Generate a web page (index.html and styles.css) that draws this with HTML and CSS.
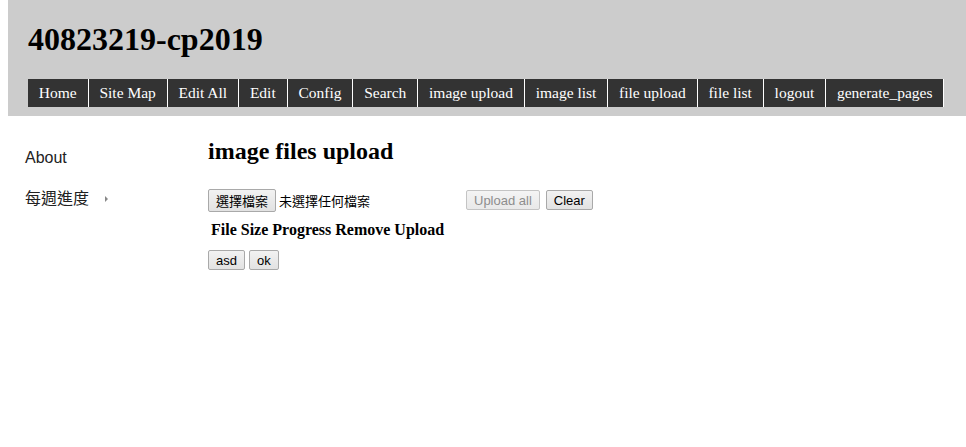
FILE: index.html
```html
<!DOCTYPE html>
<html lang="zh-Hant">
<head>
<meta charset="utf-8">
<title>40823219-cp2019</title>
<link rel="stylesheet" href="styles.css">
</head>
<body>
<header class="site-header">
  <h1 class="site-title">40823219-cp2019</h1>
  <nav class="top-nav">
    <a class="nav-item" href="#">Home</a>
    <a class="nav-item" href="#">Site Map</a>
    <a class="nav-item" href="#">Edit All</a>
    <a class="nav-item" href="#">Edit</a>
    <a class="nav-item" href="#">Config</a>
    <a class="nav-item" href="#">Search</a>
    <a class="nav-item" href="#">image upload</a>
    <a class="nav-item" href="#">image list</a>
    <a class="nav-item" href="#">file upload</a>
    <a class="nav-item" href="#">file list</a>
    <a class="nav-item" href="#">logout</a>
    <a class="nav-item" href="#">generate_pages</a>
  </nav>
</header>
<div class="main">
  <aside class="sidebar">
    <ul class="side-menu">
      <li class="side-item">About</li>
      <li class="side-item">每週進度<span class="arrow"></span></li>
    </ul>
  </aside>
  <section class="content">
    <h2 class="page-title">image files upload</h2>
    <div class="upload-row">
      <div class="file-field">
        <span class="btn btn-file">選擇檔案</span>
        <span class="file-status">未選擇任何檔案</span>
      </div>
      <button class="btn btn-disabled" disabled>Upload all</button>
      <button class="btn">Clear</button>
    </div>
    <table class="file-table">
      <tr><th>File</th><th>Size</th><th>Progress</th><th>Remove</th><th>Upload</th></tr>
    </table>
    <div class="action-row">
      <button class="btn">asd</button>
      <button class="btn">ok</button>
    </div>
  </section>
</div>
</body>
</html>
```
FILE: styles.css
```css
html, body {
  background: #fff;
}
body {
  margin: 0 0 0 8px;
  font-family: "Liberation Serif", "Times New Roman", serif;
  color: #000;
}
.site-header {
  background: #cccccc;
  padding: 1px 0 9px 20px;
}
.site-title {
  margin: 20px 0 21px 0;
  font-size: 32px;
  line-height: 37px;
  font-weight: bold;
}
.top-nav {
  display: flex;
}
.nav-item {
  display: block;
  background: #333333;
  color: #fff;
  text-decoration: none;
  font-size: 15.5px;
  line-height: 18px;
  padding: 5px 10.85px;
  border-right: 1px solid #fff;
  white-space: nowrap;
}
.main {
  display: flex;
  padding-top: 21px;
}
.sidebar {
  width: 200px;
  flex: none;
  padding-top: 10px;
}
.side-menu {
  list-style: none;
  margin: 0;
  padding: 0 0 0 17px;
}
.side-item {
  font-family: "Liberation Sans", Arial, "Noto Sans CJK TC", sans-serif;
  font-size: 16px;
  line-height: 21px;
  padding: 0 0 20px 0;
  color: #222;
  display: flex;
  align-items: center;
}
.arrow {
  display: inline-block;
  width: 0;
  height: 0;
  margin-left: 16px;
  border-left: 3px solid #888;
  border-top: 3px solid transparent;
  border-bottom: 3px solid transparent;
}
.content {
  flex: 1;
}
.page-title {
  margin: 0;
  font-size: 24px;
  line-height: 28px;
  font-weight: bold;
}
.upload-row {
  display: flex;
  align-items: flex-start;
  margin-top: 24px;
  gap: 6px;
}
.file-field {
  width: 252px;
  display: flex;
  align-items: center;
  gap: 3px;
  font-family: "Liberation Sans", Arial, "Noto Sans CJK TC", sans-serif;
  font-size: 13px;
}
.btn {
  box-sizing: border-box;
  display: inline-flex;
  align-items: center;
  justify-content: center;
  height: 20px;
  padding: 0 7px;
  margin: 1px 0 0 0;
  font-family: "Liberation Sans", Arial, "Noto Sans CJK TC", sans-serif;
  font-size: 13px;
  color: #000;
  background: linear-gradient(#f2f2f2, #e2e2e2);
  border: 1px solid #a9a9a9;
  border-radius: 2px;
}
.btn-file {
  height: 23px;
  margin-top: 0;
}
.btn-disabled {
  color: #8d8d8d;
  border-color: #c4c4c4;
  background: linear-gradient(#f4f4f4, #e9e9e9);
}
.file-status {
  color: #000;
}
.file-table {
  margin-top: 6px;
  border-spacing: 2px;
}
.file-table th {
  padding: 1px;
  font-size: 16px;
  font-weight: bold;
}
.action-row {
  display: flex;
  gap: 4px;
  margin-top: 8px;
}
.action-row .btn {
  margin: 0;
}
```
